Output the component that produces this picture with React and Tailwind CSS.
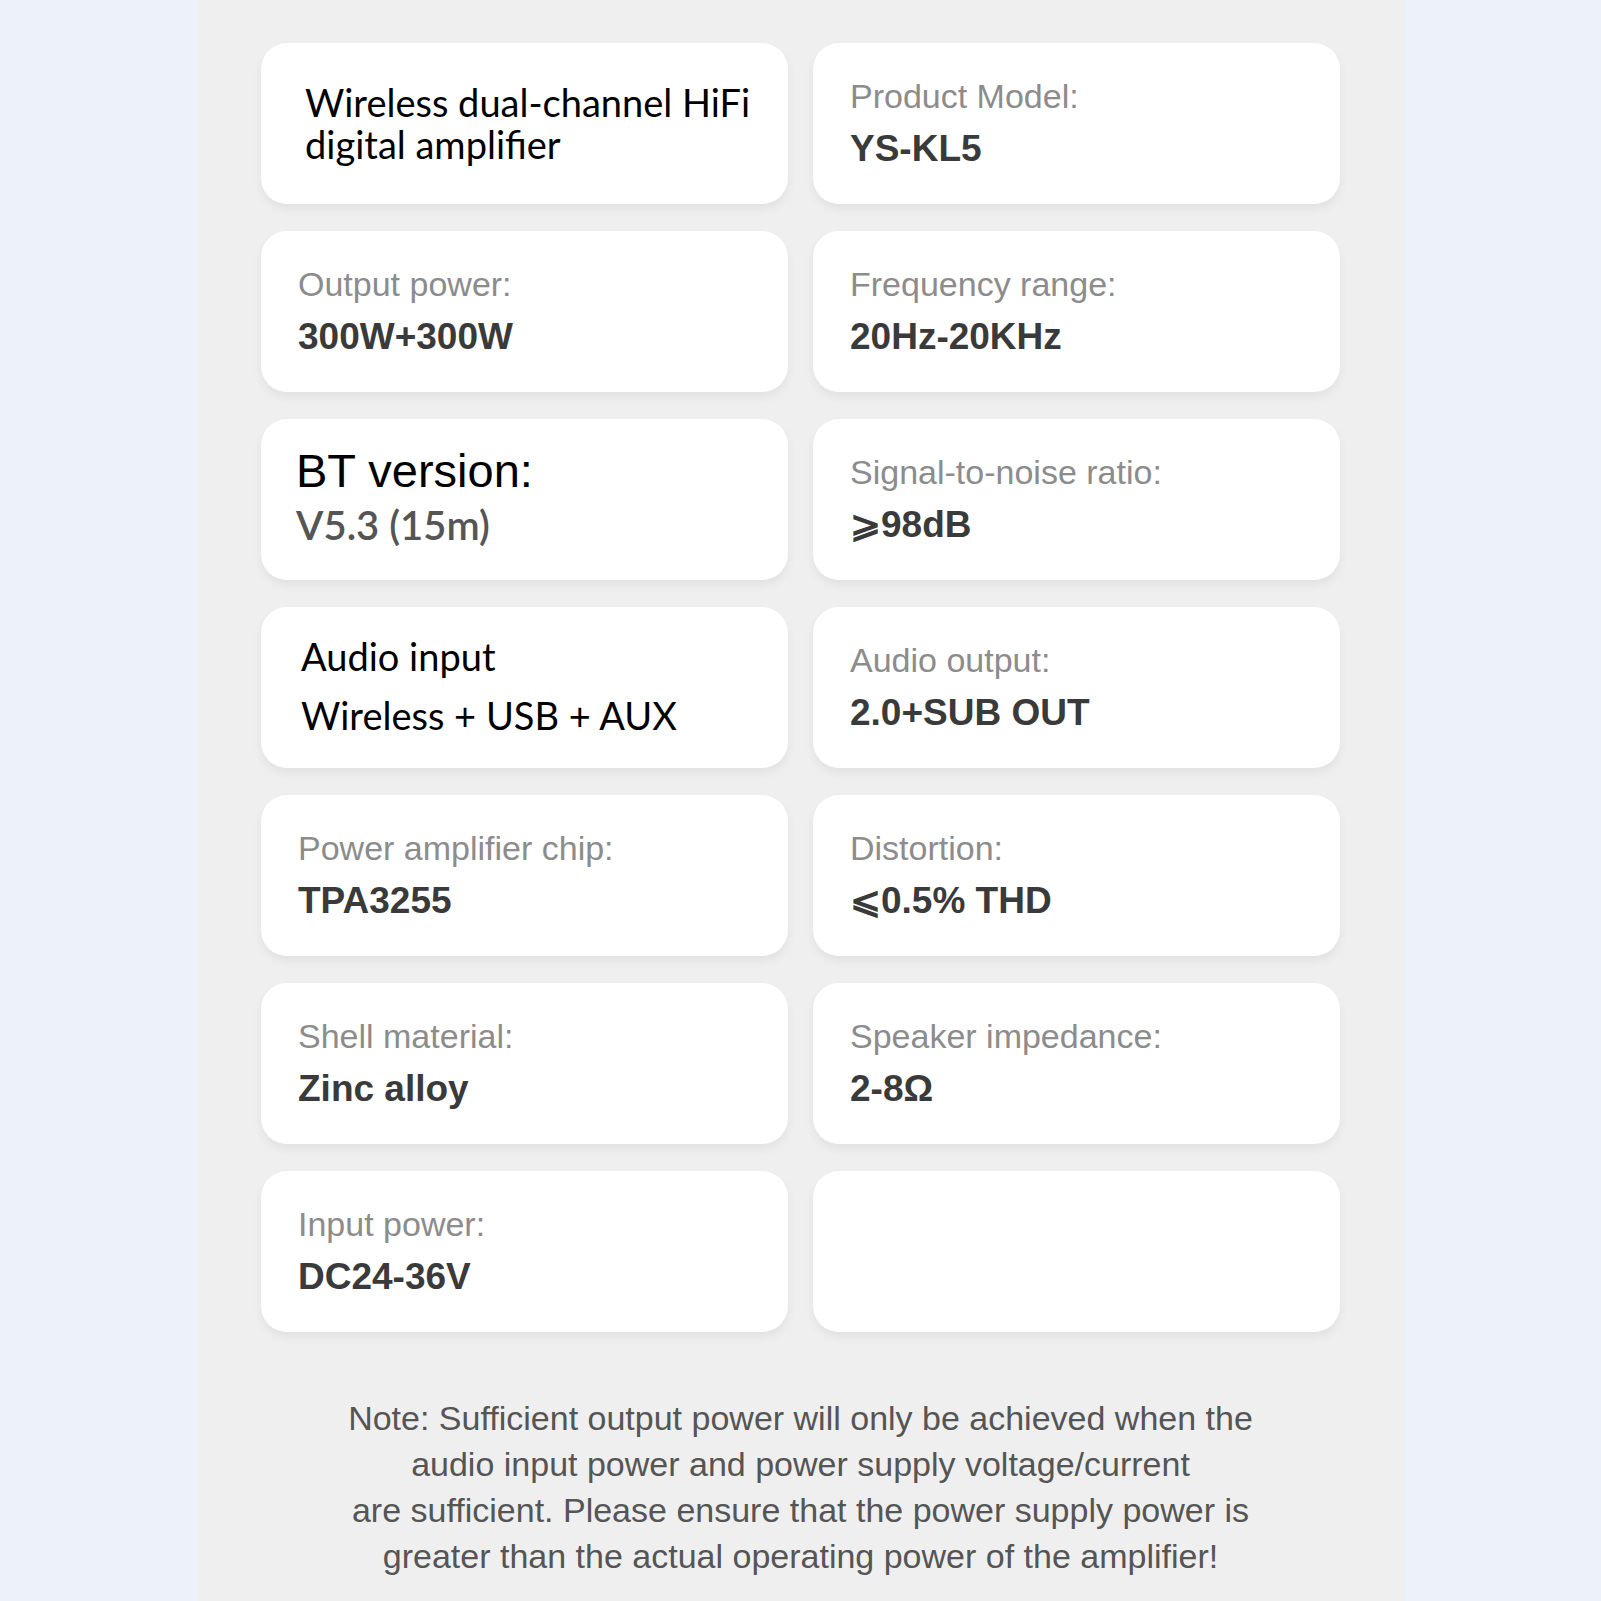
import React from 'react';

const specs = [
  { type: 'title' },
  { label: 'Product Model:', value: 'YS-KL5' },
  { label: 'Output power:', value: '300W+300W' },
  { label: 'Frequency range:', value: '20Hz-20KHz' },
  { type: 'bt' },
  { label: 'Signal-to-noise ratio:', value: '⩾98dB' },
  { type: 'audio' },
  { label: 'Audio output:', value: '2.0+SUB OUT' },
  { label: 'Power amplifier chip:', value: 'TPA3255' },
  { label: 'Distortion:', value: '⩽0.5% THD' },
  { label: 'Shell material:', value: 'Zinc alloy' },
  { label: 'Speaker impedance:', value: '2-8Ω' },
  { label: 'Input power:', value: 'DC24-36V' },
  { type: 'empty' },
];

const sans = "font-['Liberation_Sans',Arial,sans-serif]";
const soft = "font-['Lato','Open_Sans',sans-serif]";

const Card = ({ item }) => {
  const base = 'h-[161px] bg-white rounded-[26px] shadow-[0_5px_10px_rgba(0,0,0,0.06)]';

  if (item.type === 'title') {
    return (
      <div className={`${base} pt-[38px] pl-[44px]`}>
        <p className={`${soft} text-[38px] leading-[42px] text-black`}>
          Wireless dual-channel HiFi
          <br />
          digital amplifier
        </p>
      </div>
    );
  }

  if (item.type === 'bt') {
    return (
      <div className={`${base} pt-[26px] pl-[35px]`}>
        <p className={`${sans} text-[47px] leading-[52px] text-black`}>BT version:</p>
        <p className={`${soft} mt-[6px] text-[40px] leading-[44px] text-[#555] font-semibold`}>V5.3 (15m)</p>
      </div>
    );
  }

  if (item.type === 'audio') {
    return (
      <div className={`${base} pt-[29px] pl-[40px]`}>
        <p className={`${soft} text-[38px] leading-[40px] text-black`}>Audio input</p>
        <p className={`${soft} mt-[19px] text-[38px] leading-[40px] text-black`}>Wireless + USB + AUX</p>
      </div>
    );
  }

  if (item.type === 'empty') {
    return <div className={base} />;
  }

  return (
    <div className={`${base} pt-[33px] pl-[37px]`}>
      <p className={`${sans} text-[34px] leading-[40px] text-[#8c8c8c]`}>{item.label}</p>
      <p className={`${sans} mt-[11px] text-[37px] leading-[44px] text-[#3a3a3a] font-semibold`}>
        {item.value}
      </p>
    </div>
  );
};

const App = () => {
  return (
    <div className="min-h-[1601px] bg-[#ecf1fa] flex justify-center">
      <div className="w-[1208px] bg-[#efefef] pt-[43px] pb-[30px]">
        {/* Spec grid */}
        <div className="w-[1079px] mx-auto grid grid-cols-2 gap-x-[25px] gap-y-[27px]">
          {specs.map((item, i) => (
            <Card key={i} item={item} />
          ))}
        </div>

        {/* Note */}
        <p className={`${sans} mt-[63px] text-center text-[34px] leading-[46px] text-[#555]`}>
          Note: Sufficient output power will only be achieved when the
          <br />
          audio input power and power supply voltage/current
          <br />
          are sufficient. Please ensure that the power supply power is
          <br />
          greater than the actual operating power of the amplifier!
        </p>
      </div>
    </div>
  );
};

export default App;
